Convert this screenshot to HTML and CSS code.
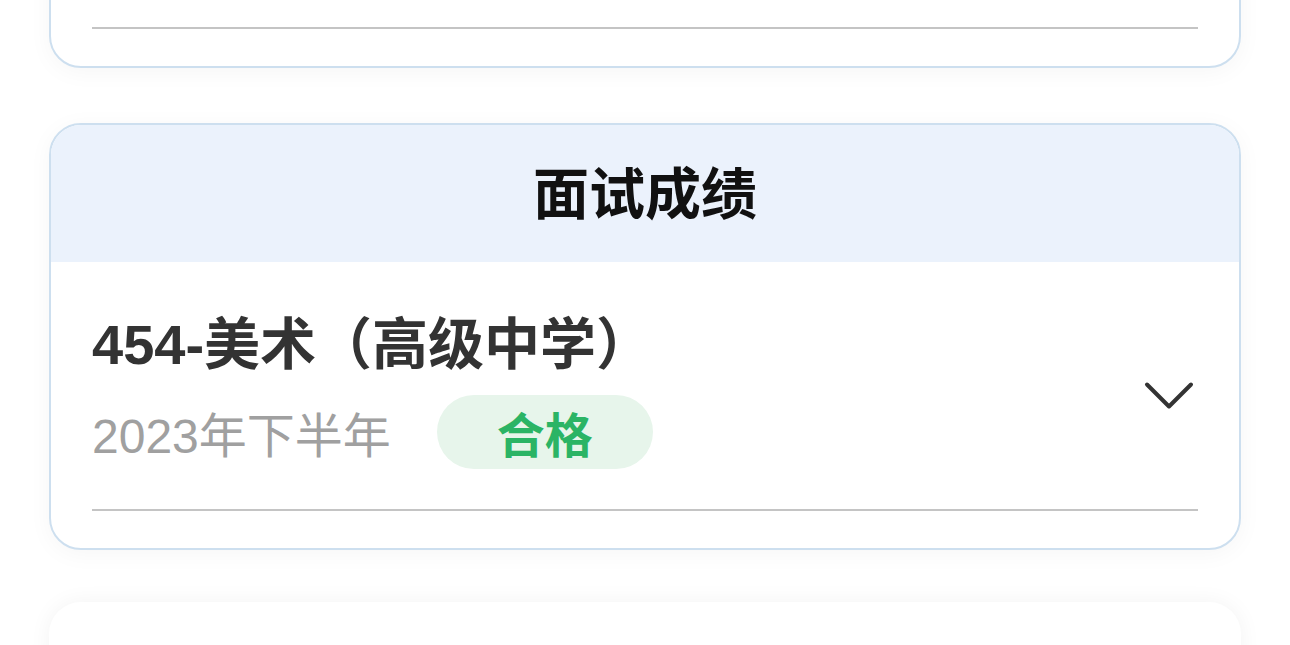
FILE: index.html
```html
<!DOCTYPE html>
<html lang="zh-CN">
<head>
    <meta charset="UTF-8">
    <meta name="viewport" content="width=device-width, initial-scale=1.0">
    <title>成绩查询</title>
    <link rel="stylesheet" href="styles.css">
</head>
<body>
    <div class="page">
        <!-- previous card, scrolled up: only its bottom edge is visible -->
        <div class="card card-cut">
            <div class="card-body">
                <div class="item-space"></div>
                <div class="divider"></div>
            </div>
        </div>

        <div class="card">
            <div class="card-head">面试成绩</div>
            <div class="card-body">
                <div class="item">
                    <div class="item-info">
                        <div class="item-title">454-美术（高级中学）</div>
                        <div class="item-meta">
                            <span class="item-date">2023年下半年</span>
                            <span class="tag">合格</span>
                        </div>
                    </div>
                    <svg class="arrow" width="56" height="48" viewBox="0 0 56 48">
                        <polyline points="5,19.5 27,41.5 49,19.5" fill="none" stroke="#333" stroke-width="4" stroke-linecap="round" stroke-linejoin="round"/>
                    </svg>
                </div>
                <div class="divider"></div>
            </div>
        </div>

        <div class="card card-plain"></div>
    </div>
</body>
</html>
```

FILE: styles.css
```css
body {
    margin: 0;
    background: #fff;
    font-family: "Liberation Sans", "Noto Sans CJK SC", sans-serif;
    height: 645px;
    overflow: hidden;
}
.page {
    padding: 0 49px;
    display: flex;
    flex-direction: column;
    gap: 55px;
}
.card {
    background: #fff;
    border: 2px solid #cddfef;
    border-radius: 32px;
    overflow: hidden;
    box-shadow: 0 4px 24px rgba(0, 0, 0, 0.04);
}
.card-cut {
    margin-top: -200px;
}
.item-space {
    height: 225px;
}
.card-plain {
    border-color: transparent;
    height: 300px;
    margin-top: -3px;
    box-shadow: 0 0 22px rgba(0, 0, 0, 0.05);
}
.card-head {
    height: 129px;
    padding-bottom: 8px;
    background: #ebf2fc;
    display: flex;
    align-items: center;
    justify-content: center;
    font-size: 56px;
    font-weight: bold;
    color: #111;
}
.card-body {
    padding: 0 41px 37px;
}
.item {
    display: flex;
    align-items: center;
    justify-content: space-between;
    padding: 46px 0 40px;
}
.item-title {
    font-size: 56px;
    line-height: 73px;
    font-weight: bold;
    color: #333;
}
.item-meta {
    display: flex;
    align-items: center;
    gap: 46px;
    margin-top: 14px;
}
.item-date {
    font-size: 48px;
    color: #a0a0a0;
}
.tag {
    height: 74px;
    padding: 0 60px;
    border-radius: 37px;
    background: #e7f5eb;
    color: #2bb465;
    font-size: 48px;
    font-weight: bold;
    display: flex;
    align-items: center;
}
.arrow {
    flex-shrink: 0;
}
.divider {
    height: 2px;
    background: #c4c4c4;
}
```
